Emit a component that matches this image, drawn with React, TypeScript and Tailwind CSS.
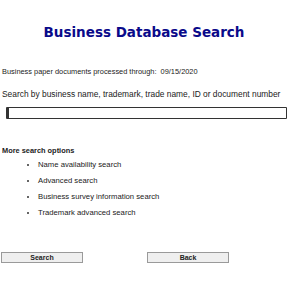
export default function App() {
  const options = [
    "Name availability search",
    "Advanced search",
    "Business survey information search",
    "Trademark advanced search",
  ];

  return (
    <main className="w-[288px] h-[288px] bg-white overflow-hidden text-[#222] font-['Liberation_Sans',Arial,sans-serif] text-[7.4px] leading-[9px]">
      {/* Heading */}
      <h1 className="pt-[23px] text-center font-['DejaVu_Sans',Verdana,sans-serif] font-bold text-[13.5px] leading-[18px] text-[#0a0a8a]">
        Business Database Search
      </h1>

      <p className="mt-[26px] pl-[2px]">Business paper documents processed through:&nbsp; 09/15/2020</p>

      <p className="mt-[14px] pl-[2px] text-[8.4px]">Search by business name, trademark, trade name, ID or document number</p>

      {/* Search box */}
      <div className="mt-[8px] pl-[6px] pr-[1px]">
        <div className="h-[12px] border border-[#333] rounded-[1px] border-l-[3px] bg-white" />
      </div>

      <p className="mt-[27px] pl-[2px] font-bold">More search options</p>

      <ul className="mt-[5px] pl-[27px] flex flex-col gap-[7px] text-[7.7px]">
        {options.map((o) => (
          <li key={o} className="flex items-center gap-[9px]">
            <span className="w-[2px] h-[2px] rounded-full bg-[#333]" />
            <span>{o}</span>
          </li>
        ))}
      </ul>

      {/* Buttons */}
      <div className="mt-[35px] flex gap-[64px] pl-[1px]">
        <button className="w-[82px] h-[11px] bg-[#efefef] border border-[#9a9a9a] font-bold text-[7px] leading-[9px] text-[#222]">
          Search
        </button>
        <button className="w-[82px] h-[11px] bg-[#efefef] border border-[#9a9a9a] font-bold text-[7px] leading-[9px] text-[#222]">
          Back
        </button>
      </div>
    </main>
  );
}
